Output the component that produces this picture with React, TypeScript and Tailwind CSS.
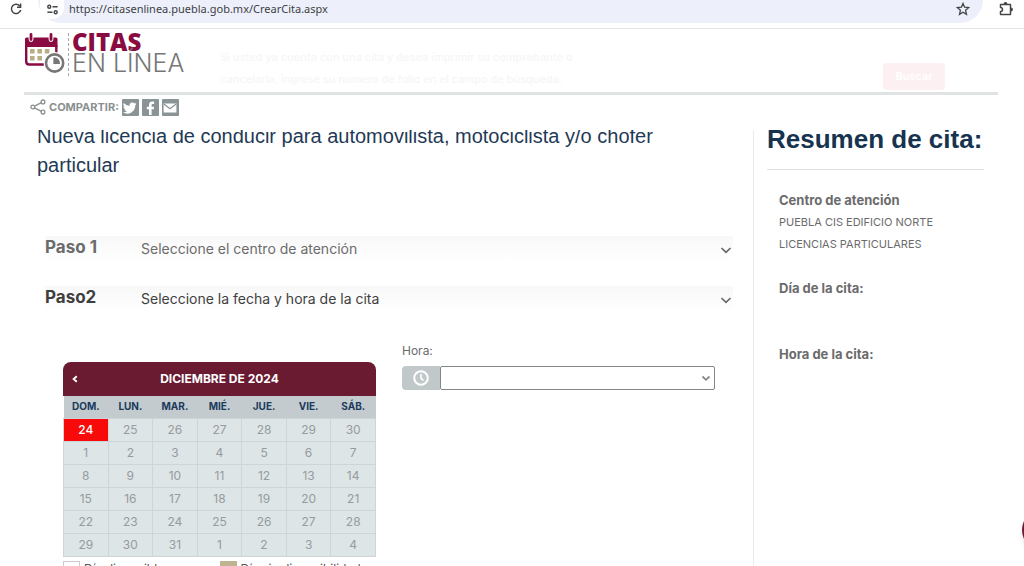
import { useState } from "react";

const weekdays = ["DOM.", "LUN.", "MAR.", "MIÉ.", "JUE.", "VIE.", "SÁB."];

const weeks = [
  [24, 25, 26, 27, 28, 29, 30],
  [1, 2, 3, 4, 5, 6, 7],
  [8, 9, 10, 11, 12, 13, 14],
  [15, 16, 17, 18, 19, 20, 21],
  [22, 23, 24, 25, 26, 27, 28],
  [29, 30, 31, 1, 2, 3, 4],
];

export default function App() {
  return (
    <div className="relative flex h-screen w-full flex-col overflow-hidden bg-white font-['Inter',sans-serif] text-[#6b6b6b]">
      <BrowserBar />
      <Header />

      <div className="-mt-2 flex min-h-0 flex-1">
        <main className="min-w-0 flex-1 pr-5">
          <h1 className="pr-10 pl-[37px] font-['Liberation_Sans',sans-serif] text-[20px] leading-[29px] text-[#1f3a56]">
            Nueva licencia de conducir para automovilista, motociclista y/o
            chofer particular
          </h1>
          <div className="mt-14 flex flex-col gap-6 pl-[45px]">
            <Step name="Paso 1" text="Seleccione el centro de atención" />
            <Step name="Paso2" text="Seleccione la fecha y hora de la cita" active />
          </div>
          <div className="mt-5 grid grid-cols-2 gap-[26px] pr-[18px] pl-[63px]">
            <div className="pt-[30px]">
              <Calendar />
              <div className="mt-1 grid grid-cols-2 text-[12px] leading-4 text-[#555]">
                <Legend text="Día disponible" swatch="border border-[#ccc] bg-white" />
                <Legend text="Día sin disponibilidad" swatch="bg-[#bfb490]" />
              </div>
            </div>
            <HourField />
          </div>
        </main>
        <Summary />
      </div>

      {/* Floating help button, mostly off the right edge */}
      <button
        aria-label="Ayuda"
        className="absolute -right-[38px] bottom-4 h-10 w-10 rounded-full bg-[#6d1a33] shadow-md"
      />
    </div>
  );
}

function BrowserBar() {
  return (
    <div className="flex h-[29px] shrink-0 items-start border-b border-[#e3e4e6] bg-white">
      <button aria-label="Recargar" className="ml-2 flex h-[17px] w-4 items-center justify-center">
        <svg viewBox="0 0 14 14" className="h-[14px] w-[14px]" fill="none" stroke="#44474a" strokeWidth="1.5">
          <path d="M11 4.2A4.7 4.7 0 1 0 11.7 8" />
          <path d="M11.6 1.6v3.6H8" />
        </svg>
      </button>
      <div className="ml-[14px] flex h-[23px] min-w-0 flex-1 items-start rounded-b-full bg-[#edf0fa]">
        <button
          aria-label="Información del sitio"
          className="ml-[2px] flex h-[19px] w-6 items-center justify-center rounded-b-full bg-white"
        >
          <svg viewBox="0 0 14 14" className="h-[13px] w-[13px]" fill="none" stroke="#44474a" strokeWidth="1.5">
            <circle cx="3.5" cy="4" r="1.6" />
            <path d="M7 4h5.5M1.5 10h5.5" />
            <circle cx="10.4" cy="10" r="1.6" />
          </svg>
        </button>
        <input
          aria-label="Dirección"
          defaultValue="https://citasenlinea.puebla.gob.mx/CrearCita.aspx"
          className="ml-[5px] h-[17px] min-w-0 flex-1 bg-transparent font-['Noto_Sans',sans-serif] text-[11px] text-[#3c4043] outline-none"
        />
        <button aria-label="Marcador" className="mr-[13px] flex h-[17px] w-[14px] items-center justify-center">
          <svg viewBox="0 0 14 14" className="h-[14px] w-[14px]" fill="none" stroke="#44474a" strokeWidth="1.3">
            <path d="M7 1.4 8.6 5.2l4.1.4-3.1 2.7.9 4L7 10.2l-3.5 2.1.9-4L1.3 5.6l4.1-.4Z" />
          </svg>
        </button>
      </div>
      <button aria-label="Extensiones" className="mr-[10px] ml-[15px] flex h-[17px] w-4 items-center justify-center">
        <svg viewBox="0 0 16 16" className="h-4 w-4" fill="none" stroke="#44474a" strokeWidth="1.5">
          <path d="M2.5 3.5h10v10h-10v-3a2 2 0 0 0 0-4Z" strokeLinejoin="round" />
          <path d="M6.3 3a1.2 1.2 0 0 1 2.4 0M13 7.3a1.2 1.2 0 0 1 0 2.4" fill="#44474a" />
        </svg>
      </button>
    </div>
  );
}

function Header() {
  return (
    <header className="z-10 shrink-0 bg-white pr-[26px] pl-6">
      <div className="flex h-[66px] items-start border-b-[3px] border-[#dfe3e3]">
        <a href="#" className="flex pt-1">
          <svg viewBox="0 0 42 42" className="h-[42px] w-[42px]">
            <path d="M2.5 4.500h29.500q1.500 0 1.500 1.500V14H1V6Q1 4.500 2.500 4.500Z" fill="#8a0b42" />
            <path d="M2.200 12v16.500q0 3 3 3H20M32.300 12v8" fill="none" stroke="#8a0b42" strokeWidth="2.4" />
            <path d="M7 2v4.500M27 2v4.500" stroke="#fff" strokeWidth="4.8" strokeLinecap="round" />
            <path d="M7 1.500v5M27 1.500v5" stroke="#8a0b42" strokeWidth="2.8" strokeLinecap="round" />
            <g fill="#b9ad86">
              <path d="M6 16h4.600v4.600H6zM13.400 16h4.600v4.600h-4.600zM20.800 16h4.600v4.600h-4.600zM6 23h4.600v4.600H6zM13.400 23h4.600v4.600h-4.600z" />
            </g>
            <circle cx="30.6" cy="30" r="11" fill="#fff" />
            <circle cx="30.6" cy="30" r="8.6" fill="#fff" stroke="#777" strokeWidth="2.6" />
            <path d="M29.4 31v-6.6a6 6 0 0 1 6.600 6.600Z" fill="#777" />
          </svg>
          <span className="ml-[2px] border-l border-dashed border-[#aaa] pl-[3px]">
            <span className="block font-['Open_Sans',sans-serif] text-[24px] leading-[17px] font-extrabold text-[#8a0b42]">
              CITAS
            </span>
            <span className="block text-[25px] leading-[26px] font-light text-[#777]">EN LÍNEA</span>
          </span>
        </a>
        <div className="ml-9 pt-[17px] text-[11px] leading-[22px] font-medium whitespace-nowrap text-[#f6f6f6]">
          <p>Si usted ya cuenta con una cita y desea imprimir su comprobante o</p>
          <p>cancelarla, ingrese su número de folio en el campo de búsqueda.</p>
        </div>
        <button className="mt-[34px] mr-[53px] ml-auto h-[27px] w-[62px] rounded-sm bg-[#fdf0f3] text-[11px] font-semibold text-white">
          Buscar
        </button>
      </div>
      <div className="flex h-[35px] items-start gap-[3px] pt-1 pl-[6px]">
        <svg viewBox="0 0 16 16" className="h-4 w-4" fill="none" stroke="#8a9090" strokeWidth="1.3">
          <path d="m4.4 7.2 7-3.6M4.4 8.8l7 3.6" />
          <circle cx="2.8" cy="8" r="1.9" />
          <circle cx="13" cy="2.9" r="1.9" />
          <circle cx="13" cy="13.1" r="1.9" />
        </svg>
        <span className="text-[11px] leading-4 font-bold text-[#8a9090]">COMPARTIR:</span>
        <ShareLink label="Twitter">
          <path
            d="M14.6 3.7c-.5.2-1 .4-1.6.4.6-.3 1-.8 1.2-1.5-.5.3-1.1.6-1.8.7a2.9 2.9 0 0 0-4.9 2.6A8 8 0 0 1 1.8 3a2.8 2.8 0 0 0 .9 3.7c-.5 0-.9-.1-1.3-.3 0 1.4 1 2.5 2.3 2.8-.4.1-.9.1-1.3 0 .4 1.2 1.4 2 2.7 2a5.800 5.800 0 0 1-4.200 1.100A8.100 8.100 0 0 0 13.300 5c.5-.4 1-.8 1.300-1.300Z"
            fill="#fff"
          />
        </ShareLink>
        <ShareLink label="Facebook">
          <path d="M7 15V9.3H4.8V6.7H7V5c0-2.3 1.3-3.4 3.3-3.4h1.8V4h-1.3c-1 0-1.2.5-1.2 1.2v1.5H12l-.3 2.6H9.6V15Z" fill="#fff" />
        </ShareLink>
        <ShareLink label="Correo">
          <path d="M1.6 3.5h12.8v9H1.6Z" fill="#fff" />
          <path d="m1.8 4 6.200 4.800L14.200 4" fill="none" stroke="#8a9497" strokeWidth="1.3" />
        </ShareLink>
      </div>
    </header>
  );
}

function ShareLink({ label, children }: { label: string; children: React.ReactNode }) {
  return (
    <a href="#" aria-label={label} className="flex h-[17px] w-[17px] items-center justify-center rounded-[1px] bg-[#8a9497]">
      <svg viewBox="0 0 16 16" className="h-4 w-4">
        {children}
      </svg>
    </a>
  );
}

function Step({ name, text, active }: { name: string; text: string; active?: boolean }) {
  return (
    <button
      className={`flex h-[26px] w-full items-center bg-linear-to-b from-[#f8f8f8] to-white pb-[2px] text-left ${
        active ? "text-[#3f3f3f]" : "text-[#6b6b6b]"
      }`}
    >
      <span className="w-24 text-[17px] font-bold">{name}</span>
      <span className="flex-1 text-[14px]">{text}</span>
      <svg viewBox="0 0 12 12" className="mt-1 mr-[1px] h-3 w-3" fill="none" stroke="#666" strokeWidth="1.6">
        <path d="m1.5 4 4.5 4.3L10.5 4" />
      </svg>
    </button>
  );
}

function Calendar() {
  return (
    <div className="overflow-hidden rounded-t-lg">
      <div className="flex h-[34px] items-center bg-[#6a1b32] text-white">
        <button aria-label="Mes anterior" className="flex w-6 justify-center">
          <svg viewBox="0 0 8 8" className="h-2 w-2" fill="none" stroke="#fff" strokeWidth="1.8">
            <path d="M5.8 1.2 2.6 4l3.2 2.8" />
          </svg>
        </button>
        <h2 className="flex-1 pr-6 text-center text-[12px] font-bold">DICIEMBRE DE 2024</h2>
      </div>
      <table className="w-full table-fixed border-collapse">
        <thead>
          <tr className="h-[22px] bg-[#c3cbce] text-[10px] text-[#1b3a5c]">
            {weekdays.map((day) => (
              <th key={day} className="p-0 font-bold">
                {day}
              </th>
            ))}
          </tr>
        </thead>
        <tbody>
          {weeks.map((week, row) => (
            <tr key={row} className="h-[23px] text-[12px] leading-4">
              {week.map((day, col) => (
                <td
                  key={col}
                  className={`border border-[#ced5d7] p-0 text-center ${
                    row === 0 && col === 0
                      ? "bg-[#f80a0a] font-medium text-white"
                      : "bg-[#dde5e7] text-[#969b9d]"
                  }`}
                >
                  {day}
                </td>
              ))}
            </tr>
          ))}
        </tbody>
      </table>
    </div>
  );
}

function Legend({ text, swatch }: { text: string; swatch: string }) {
  return (
    <div className="flex items-start gap-1 whitespace-nowrap">
      <span className={`h-4 w-[17px] shrink-0 ${swatch}`} />
      {text}
    </div>
  );
}

function HourField() {
  const [hour, setHour] = useState("");

  return (
    <div className="pt-[9px]">
      <label htmlFor="hour" className="block text-[12px] leading-5">
        Hora:
      </label>
      <div className="mt-[5px] flex h-6">
        <span className="flex w-[38px] shrink-0 items-center justify-center rounded-l-sm bg-[#c1c8ca]">
          <svg viewBox="0 0 16 16" className="h-4 w-4" fill="none" stroke="#fff" strokeWidth="2">
            <circle cx="8" cy="8" r="6.8" />
            <path d="M8 4v4.3l2.5 2" strokeWidth="1.6" />
          </svg>
        </span>
        <div className="relative min-w-0 flex-1">
          <select
            id="hour"
            value={hour}
            onChange={(e) => setHour(e.target.value)}
            className="block h-6 w-full appearance-none rounded-[2px] border border-[#858585] bg-white px-2 text-[12px]"
          >
            <option value=""></option>
          </select>
          <svg
            viewBox="0 0 12 12"
            className="pointer-events-none absolute top-[6px] right-[3px] h-3 w-3"
            fill="none"
            stroke="#888"
            strokeWidth="1.8"
          >
            <path d="m2.5 4.5 3.5 3.3 3.5-3.3" />
          </svg>
        </div>
      </div>
    </div>
  );
}

function Summary() {
  return (
    <aside className="w-[271px] shrink-0 border-l border-[#ebebeb] pr-10 pl-[13px]">
      <h2 className="border-b border-[#e2e2e2] pt-[2px] pb-[15px] font-['Liberation_Sans',sans-serif] text-[26px] leading-[30px] font-bold whitespace-nowrap text-[#16334f]">
        Resumen de cita:
      </h2>
      <div className="pt-[19px] pl-3 text-[11px] leading-[22px]">
        <p className="text-[13px] font-bold">Centro de atención</p>
        <p>PUEBLA CIS EDIFICIO NORTE</p>
        <p>LICENCIAS PARTICULARES</p>
        <p className="mt-[22px] text-[13px] font-bold">Día de la cita:</p>
        <p className="mt-11 text-[13px] font-bold">Hora de la cita:</p>
      </div>
    </aside>
  );
}
